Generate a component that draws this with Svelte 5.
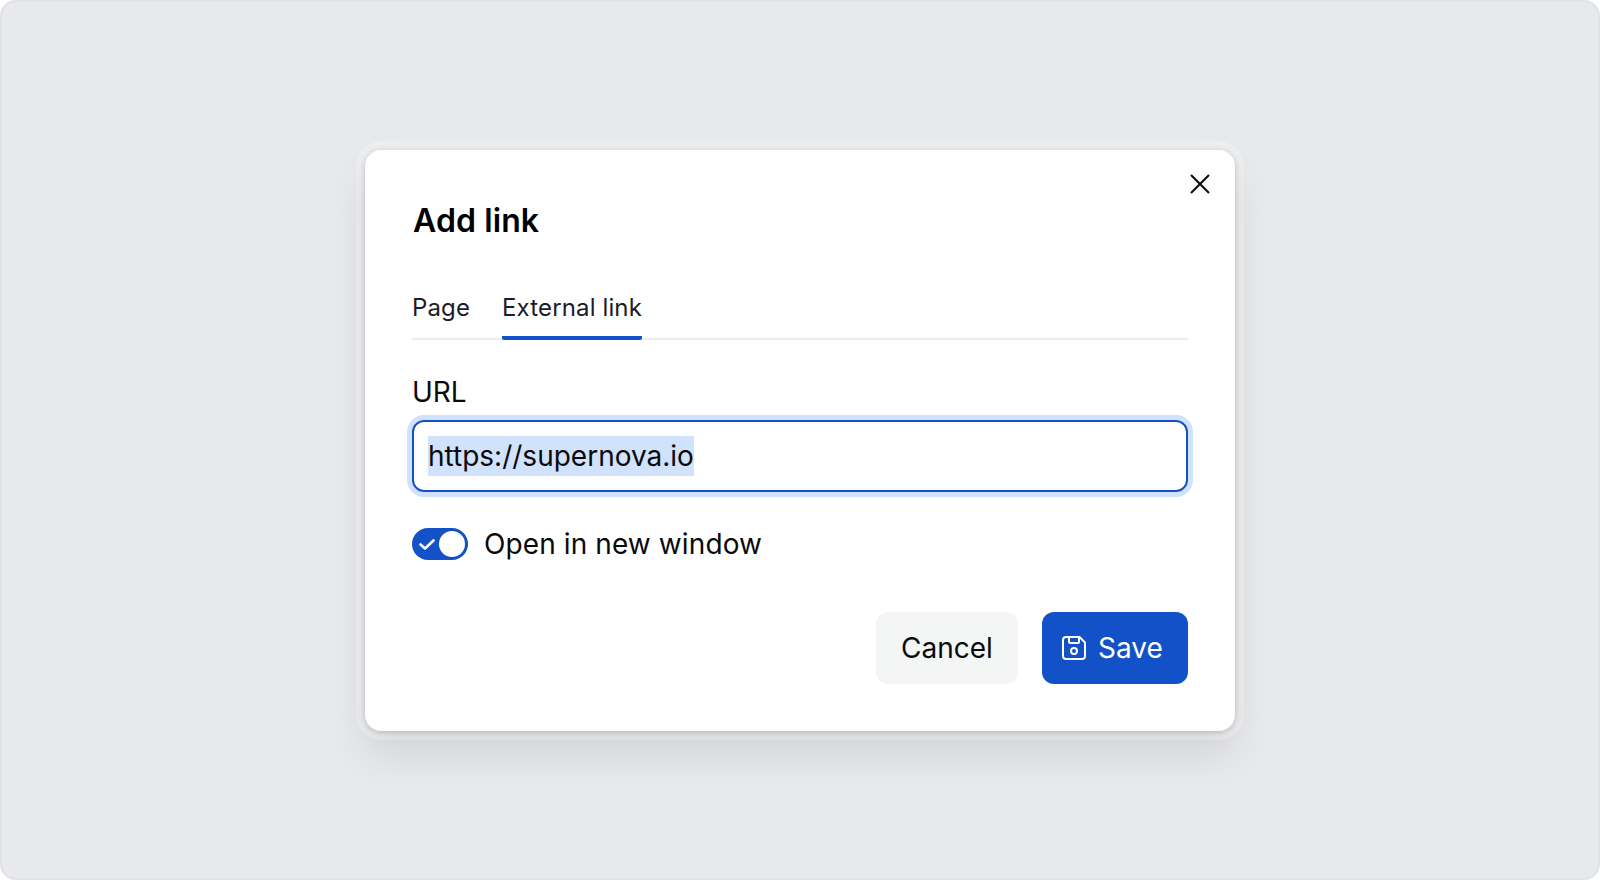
<script>
  let openInNewWindow = $state(true)
  let activeTab = $state("External link")
  const tabs = ["Page", "External link"]
</script>

<main class="page">
  <div class="dialog">
    <button class="close" aria-label="Close">
      <svg width="20" height="20" viewBox="0 0 20 20" fill="none" stroke="#0a0a0a" stroke-width="2">
        <path d="M1 1L19 19M19 1L1 19" />
      </svg>
    </button>

    <h2 class="title">Add link</h2>

    <div class="tabs">
      {#each tabs as tab}
        <button class="tab" class:active={activeTab === tab} onclick={() => (activeTab = tab)}>{tab}</button>
      {/each}
    </div>

    <div class="label">URL</div>
    <div class="input"><span class="selected">https://supernova.io</span></div>

    <div class="switch-row">
      <button class="switch" class:on={openInNewWindow} aria-label="Open in new window" onclick={() => (openInNewWindow = !openInNewWindow)}>
        <svg width="16" height="16" viewBox="0 0 16 16" fill="none" stroke="#fff" stroke-width="2.6" stroke-linecap="round" stroke-linejoin="round">
          <path d="M1.5 8.5L6 12.5L14.5 4.5" />
        </svg>
        <span class="knob"></span>
      </button>
      <span class="switch-label">Open in new window</span>
    </div>

    <div class="actions">
      <button class="btn cancel">Cancel</button>
      <button class="btn save">
        <svg width="24" height="24" viewBox="0 0 24 24" fill="none" stroke="#fff" stroke-width="2" stroke-linecap="round" stroke-linejoin="round">
          <path d="M4 1h13.5L23 6.5V20a3 3 0 0 1-3 3H4a3 3 0 0 1-3-3V4a3 3 0 0 1 3-3z" />
          <path d="M7 1v5a1 1 0 0 0 1 1h8a1 1 0 0 0 1-1V1" />
          <circle cx="12" cy="15" r="3" />
        </svg>
        Save
      </button>
    </div>
  </div>
</main>

<style>
  :global(body) {
    margin: 0;
    background: #fff;
  }

  .page {
    box-sizing: border-box;
    width: 1600px;
    height: 880px;
    display: flex;
    align-items: center;
    justify-content: center;
    background: #e8e9eb;
    border: 2px solid #dfe1e4;
    border-radius: 16px;
    font-family: Inter, "Liberation Sans", sans-serif;
    color: #0a0a0a;
  }

  button {
    font-family: inherit;
    border: none;
    background: none;
    padding: 0;
    cursor: pointer;
  }

  .dialog {
    position: relative;
    box-sizing: border-box;
    width: 870px;
    height: 581px;
    padding: 48px 47px 0;
    background: #fff;
    border-radius: 16px;
    box-shadow:
      0 1px 5px rgba(0, 0, 0, 0.17),
      0 0 0 9px rgba(255, 255, 255, 0.24),
      0 4px 14px rgba(0, 0, 0, 0.05),
      0 24px 40px rgba(0, 0, 0, 0.09);
  }

  .close {
    position: absolute;
    top: 24px;
    right: 25px;
    width: 20px;
    height: 20px;
    display: block;
  }

  .close svg {
    display: block;
  }

  .title {
    margin: 0 0 0 1px;
    font-size: 32px;
    line-height: 46px;
    font-weight: 600;
    letter-spacing: 0.1px;
    color: #000;
  }

  .tabs {
    display: flex;
    gap: 32px;
    margin-top: 47px;
    height: 47px;
    border-bottom: 2px solid #ebecef;
  }

  .tab {
    height: 49px;
    padding-bottom: 13px;
    box-sizing: border-box;
    font-size: 24px;
    line-height: 34px;
    letter-spacing: 0.13px;
    color: #1b1c26;
    border-bottom: 4px solid transparent;
    border-radius: 2px;
  }

  .tab.active {
    border-bottom-color: #1351c8;
  }

  .label {
    margin-top: 32px;
    font-size: 28px;
    line-height: 40px;
    color: #0a0a0a;
  }

  .input {
    box-sizing: border-box;
    height: 72px;
    margin-top: 8px;
    padding: 0 14px;
    display: flex;
    align-items: center;
    border: 2px solid #1351c8;
    border-radius: 12px;
    box-shadow: 0 0 0 5px #d1e2fd;
    font-size: 28px;
  }

  .selected {
    background: #d1e2fd;
    line-height: 40px;
  }

  .switch-row {
    display: flex;
    align-items: center;
    gap: 16px;
    margin-top: 32px;
  }

  .switch {
    box-sizing: border-box;
    width: 56px;
    height: 32px;
    padding: 0 3px 0 7px;
    border-radius: 16px;
    background: #d1d5db;
    display: flex;
    align-items: center;
    justify-content: space-between;
  }

  .switch.on {
    background: #1351c8;
  }

  .knob {
    width: 26px;
    height: 26px;
    border-radius: 50%;
    background: #fff;
  }

  .switch-label {
    font-size: 28px;
    line-height: 40px;
    letter-spacing: 0.1px;
  }

  .actions {
    display: flex;
    justify-content: flex-end;
    gap: 24px;
    margin-top: 48px;
  }

  .btn {
    height: 72px;
    border-radius: 12px;
    font-size: 28px;
    display: flex;
    align-items: center;
  }

  .cancel {
    width: 142px;
    justify-content: center;
    background: #f4f5f5;
    color: #0a0a0a;
  }

  .save {
    width: 146px;
    padding-left: 20px;
    gap: 12px;
    background: #1351c8;
    color: #fff;
  }
</style>
